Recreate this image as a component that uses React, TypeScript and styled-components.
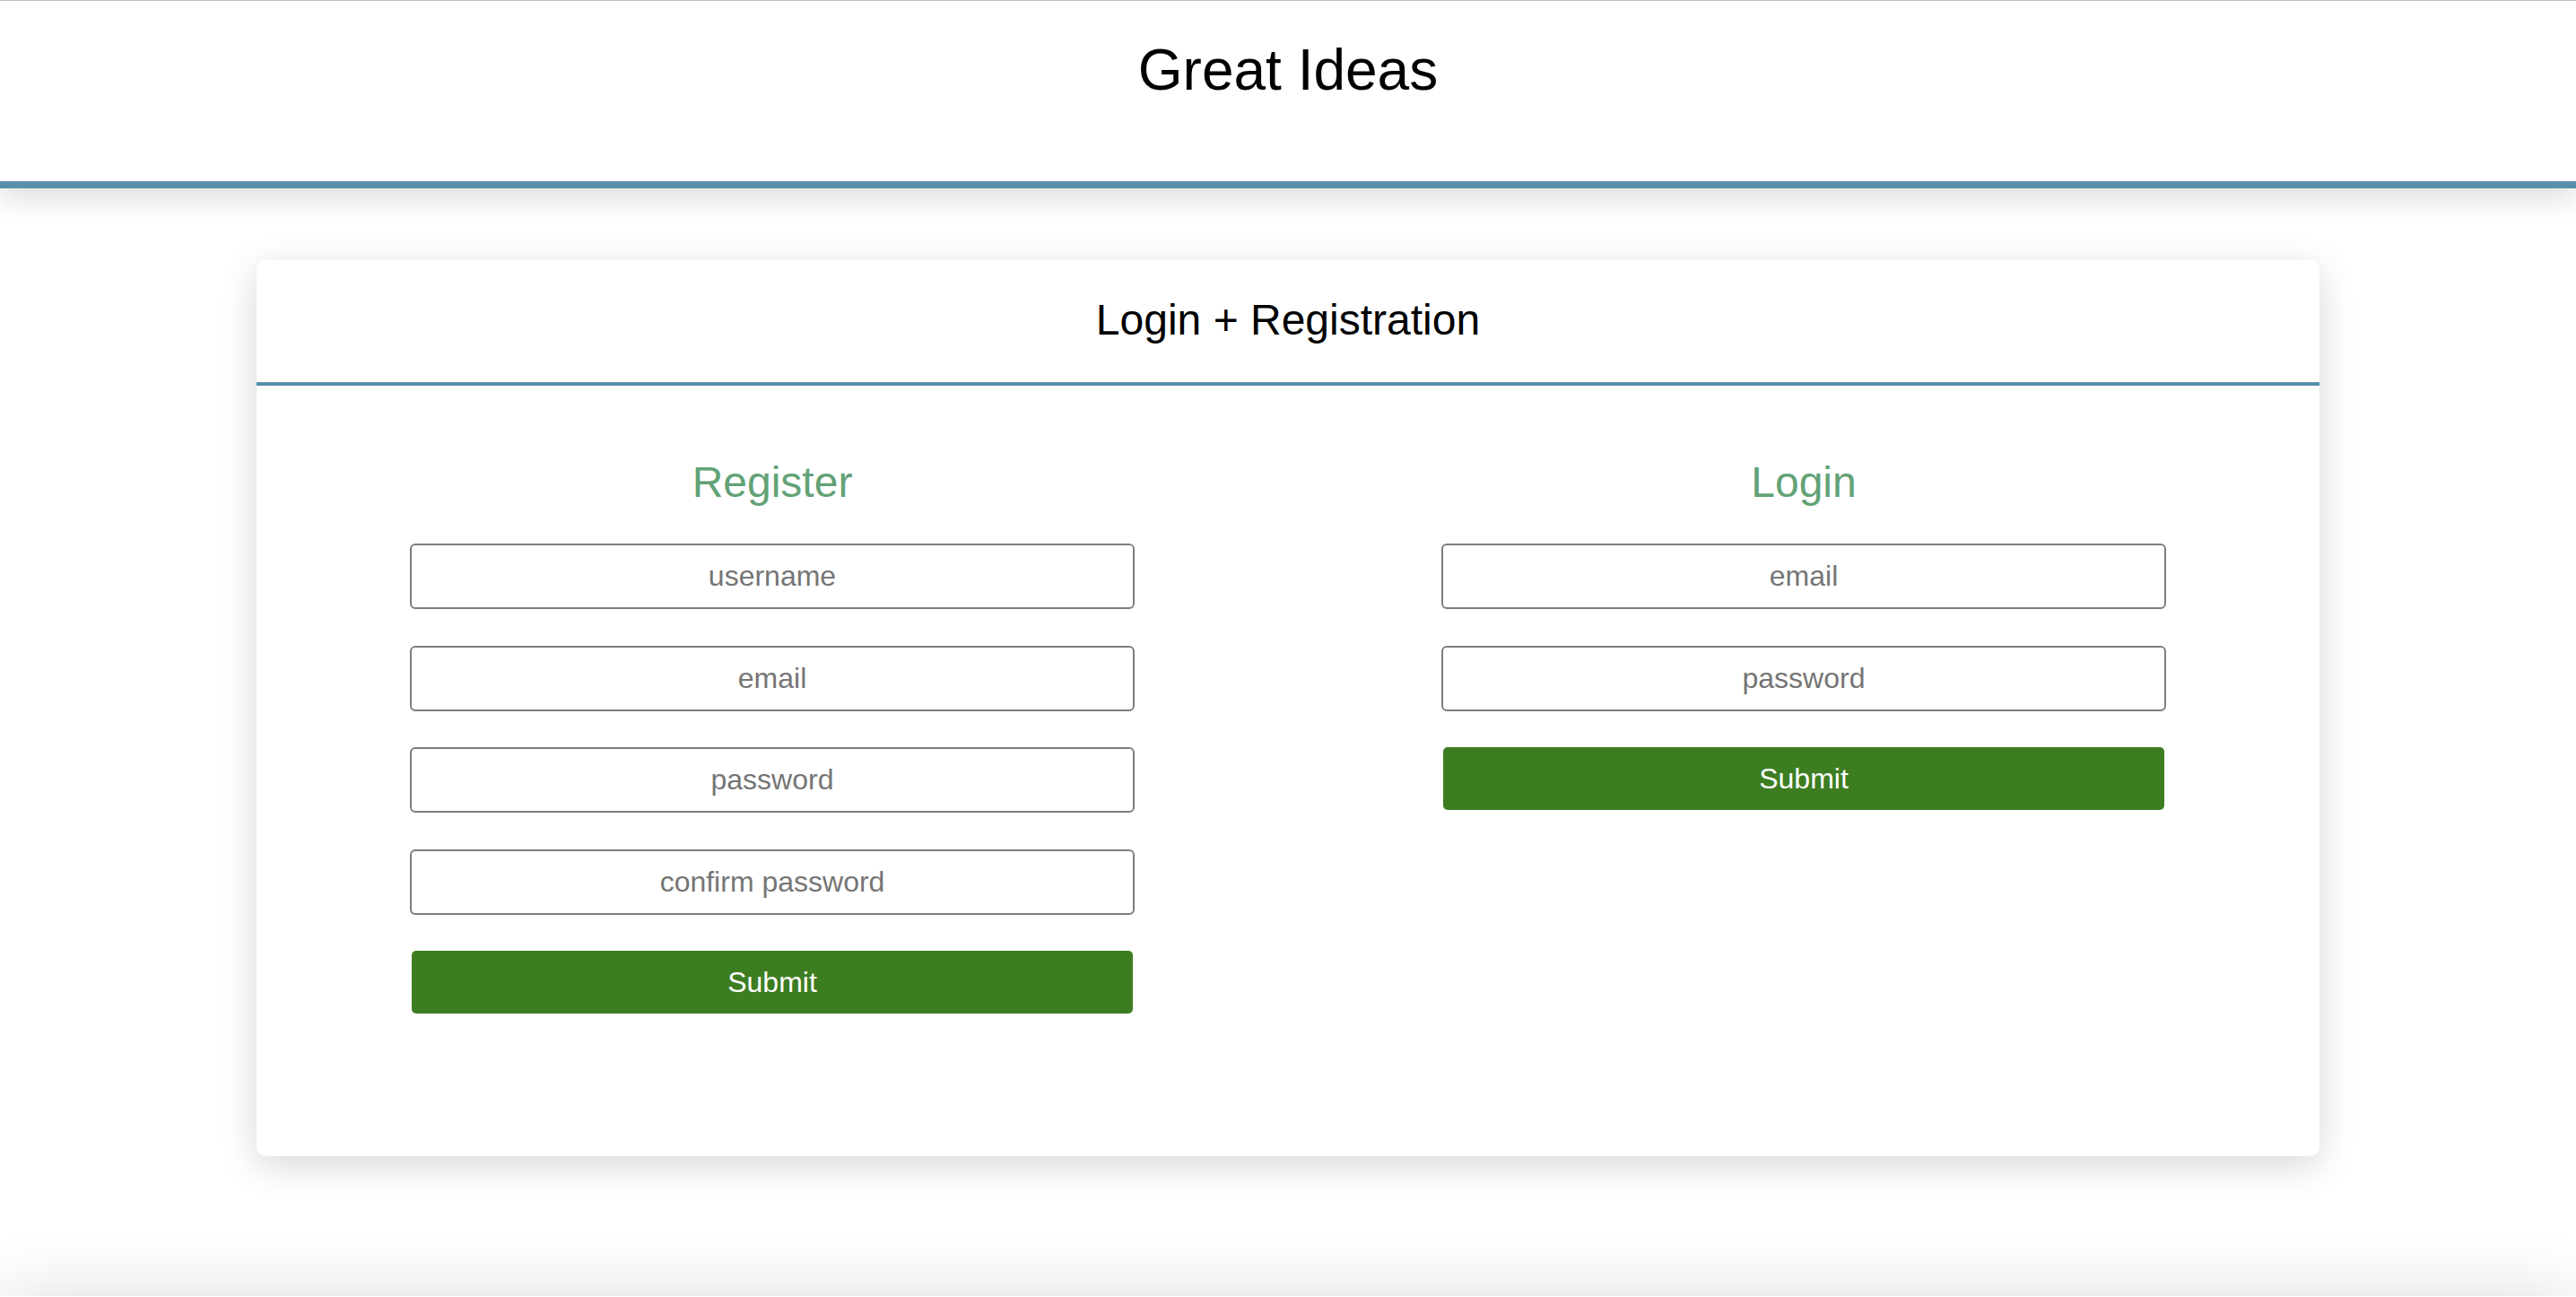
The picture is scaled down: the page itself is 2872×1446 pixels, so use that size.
import React from "react";
import styled, { createGlobalStyle } from "styled-components";

const GlobalStyle = createGlobalStyle`
  html, body {
    margin: 0;
    padding: 0;
    background: #ffffff;
    font-family: "Liberation Sans", Arial, Helvetica, sans-serif;
    overflow: hidden;
  }
  * { box-sizing: border-box; }
`;

const Page = styled.div`
  min-height: 1446px;
  display: flex;
  flex-direction: column;
  align-items: center;
`;

const Header = styled.header`
  width: 100%;
  height: 210px;
  border-top: 1px solid #c2c2c2;
  border-bottom: 8px solid #588fac;
  background: #ffffff;
  box-shadow: 0 12px 30px rgba(0, 0, 0, 0.13);
  display: flex;
  justify-content: center;
  padding-top: 45px;
  position: relative;
  z-index: 1;
`;

const SiteTitle = styled.h1`
  margin: 0;
  font-size: 64px;
  line-height: 64px;
  font-weight: 400;
  color: #000000;
`;

const Card = styled.section`
  width: 2300px;
  margin-top: 80px;
  background: #ffffff;
  border-radius: 10px;
  box-shadow: 0 10px 40px rgba(0, 0, 0, 0.16);
  display: flex;
  flex-direction: column;
`;

const CardHeader = styled.div`
  padding: 43px 0 45px;
  border-bottom: 4px solid #588fac;
  display: flex;
  justify-content: center;
`;

const CardTitle = styled.h2`
  margin: 0;
  font-size: 48px;
  line-height: 48px;
  font-weight: 400;
  color: #000000;
`;

const Columns = styled.div`
  display: grid;
  grid-template-columns: 1fr 1fr;
`;

const Column = styled.div`
  display: flex;
  flex-direction: column;
  align-items: center;
  padding: 84px 0 159px;
`;

const FormTitle = styled.h3`
  margin: 0 0 44px;
  font-size: 48px;
  line-height: 48px;
  font-weight: 400;
  color: #62a276;
`;

const Form = styled.form`
  width: 808px;
  display: flex;
  flex-direction: column;
  align-items: center;
  gap: 40.5px;
`;

const Field = styled.input`
  width: 808px;
  height: 73px;
  border: 2px solid #7d7d7d;
  border-radius: 6px;
  background: #ffffff;
  font-family: "Liberation Sans", Arial, Helvetica, sans-serif;
  font-size: 32px;
  text-align: center;
  color: #333333;
  outline: none;
  &::placeholder {
    color: #757575;
  }
`;

const SubmitButton = styled.button`
  width: 804px;
  height: 70px;
  border: none;
  border-radius: 5px;
  background: #3d7d22;
  color: #ffffff;
  font-family: "Liberation Sans", Arial, Helvetica, sans-serif;
  font-size: 32px;
  cursor: pointer;
`;

const Footer = styled.footer`
  width: 100%;
  height: 120px;
  margin-top: 156px;
  background: #ffffff;
  box-shadow: 0 0 80px rgba(0, 0, 0, 0.14);
`;

export default function App() {
  return (
    <>
      <GlobalStyle />
      <Page>
        <Header>
          <SiteTitle>Great Ideas</SiteTitle>
        </Header>
        <Card>
          <CardHeader>
            <CardTitle>Login + Registration</CardTitle>
          </CardHeader>
          <Columns>
            <Column>
              <FormTitle>Register</FormTitle>
              <Form onSubmit={(e) => e.preventDefault()}>
                <Field type="text" placeholder="username" />
                <Field type="email" placeholder="email" />
                <Field type="password" placeholder="password" />
                <Field type="password" placeholder="confirm password" />
                <SubmitButton type="submit">Submit</SubmitButton>
              </Form>
            </Column>
            <Column>
              <FormTitle>Login</FormTitle>
              <Form onSubmit={(e) => e.preventDefault()}>
                <Field type="email" placeholder="email" />
                <Field type="password" placeholder="password" />
                <SubmitButton type="submit">Submit</SubmitButton>
              </Form>
            </Column>
          </Columns>
        </Card>
        <Footer />
      </Page>
    </>
  );
}
